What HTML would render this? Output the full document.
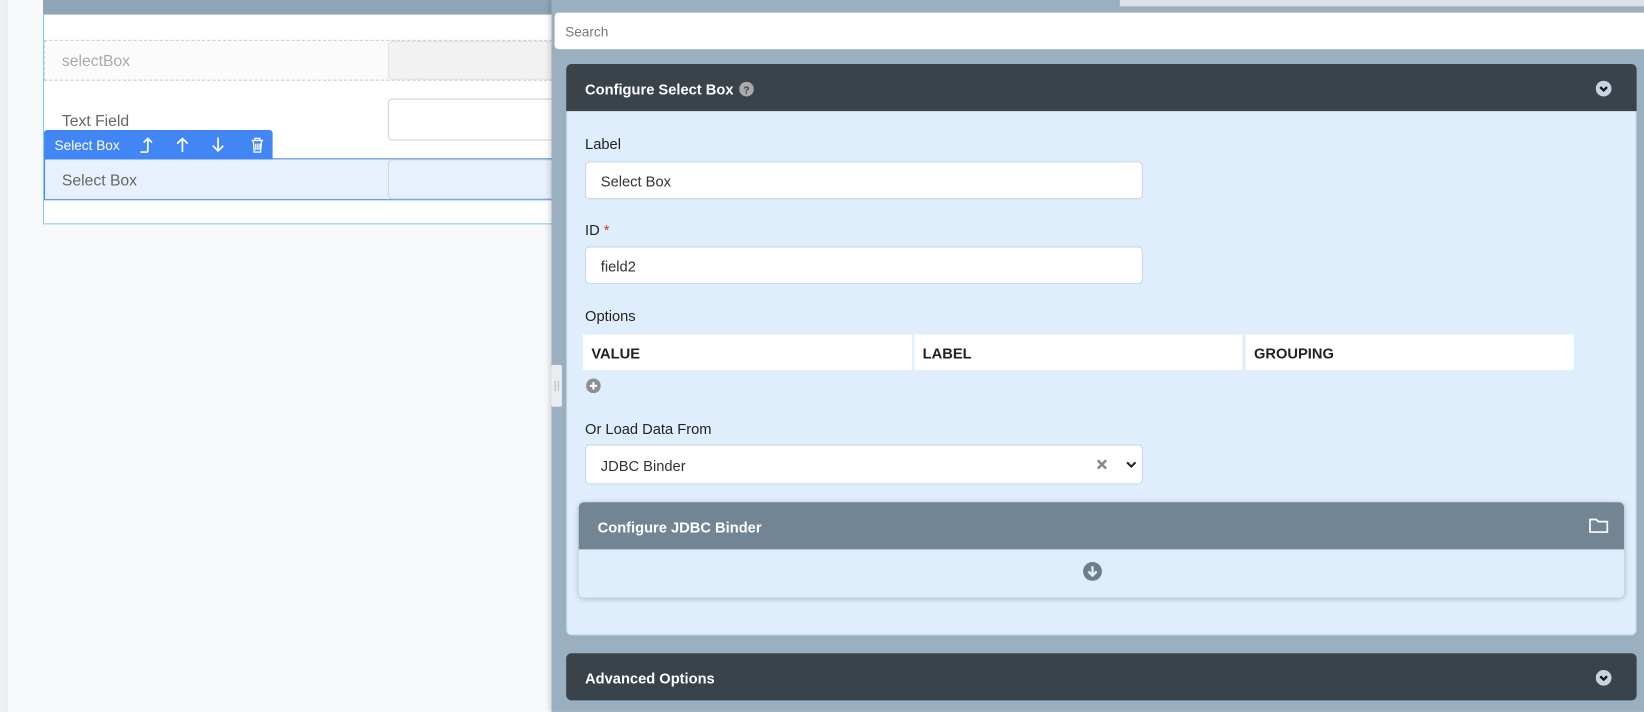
<!DOCTYPE html>
<html><head><meta charset="utf-8"><style>
*{box-sizing:border-box;margin:0;padding:0}
html,body{width:1644px;height:712px;overflow:hidden;background:#f7f9fb;font-family:"Liberation Sans",sans-serif}
#w{position:absolute;left:0;top:0;width:1568px;height:679px;transform:scale(1.04847);transform-origin:0 0;background:#f7f9fb}
.a{position:absolute}
.lbl{position:absolute;font-size:14px;color:#222}
.inp{position:absolute;background:#fff;border:1px solid #ccd6e0;border-radius:4px;font-size:14px;color:#333;padding-left:14px;padding-top:1px;display:flex;align-items:center}
.th{position:absolute;top:319px;height:34px;background:#fff;font-weight:bold;font-size:14px;color:#222;padding-left:8px;padding-top:2px;display:flex;align-items:center}
.hd{position:absolute;color:#fff;font-weight:bold;font-size:14px;display:flex;align-items:center;padding-top:2px}
</style></head><body><div id="w">
<div class="a" style="left:0;top:0;width:7px;height:679px;background:#eceef1;border-right:1px solid #e2e5e8"></div>
<div class="a" style="left:41px;top:0;width:490px;height:14px;background:#8fa5b8"></div>
<div class="a" style="left:41px;top:14px;width:490px;height:200px;background:#fff;border:1px solid #7fd0f5;border-top:none"></div>
<div class="a" style="left:42px;top:38px;width:490px;height:39px;background:#fbfbfb;border:1px dashed #ccc;border-right:none"></div>
<div class="a" style="left:59px;top:50px;font-size:15px;color:#aaa">selectBox</div>
<div class="a" style="left:370px;top:39px;width:170px;height:37px;background:#f2f2f2;border:1px solid #e3e3e3;border-radius:4px"></div>
<div class="a" style="left:59px;top:107px;font-size:15px;color:#666">Text Field</div>
<div class="a" style="left:370px;top:94px;width:170px;height:40px;background:#fff;border:1px solid #ccd3dc;border-radius:4px"></div>
<div class="a" style="left:42px;top:151px;width:490px;height:40px;background:#e8f0fd;border:1px solid #4a88ec;border-right:none"></div>
<div class="a" style="left:59px;top:164px;font-size:15px;color:#666">Select Box</div>
<div class="a" style="left:370px;top:152px;width:170px;height:38px;background:#e8f0fd;border:1px solid #ccd6e6;border-radius:4px"></div>
<div class="a" style="left:42px;top:124px;width:218px;height:28px;background:#4285f4;border-radius:3px 3px 0 0;color:#fff;font-size:13px;padding:7px 0 0 10px">Select Box</div>
<svg class="a" style="left:132px;top:129px" width="120" height="18" fill="none" stroke="#fff" stroke-width="1.6">
<path d="M9 16V3M5 7l4-4 4 4M2 16h7"/><path d="M42 16V3M37 8l5-5 5 5"/><path d="M76 2v13M71 10l5 5 5-5"/>
<path d="M108 5h11M111 5V3h5v2M109.5 5l1 11h6l1-11M112 8v6M114 8v6M116 8v6" stroke-width="1.3"/></svg>
<div class="a" style="left:526px;top:0;width:1042px;height:679px;background:#9aafc0;box-shadow:-3px 0 4px rgba(0,0,0,.12)"></div>
<div class="a" style="left:1068px;top:0;width:500px;height:6px;background:#dde1e6"></div>
<div class="a" style="left:529px;top:12px;width:1045px;height:35px;background:#fff;border-radius:4px;font-size:13px;color:#777;padding:11px 0 0 10px">Search</div>
<div class="a" style="left:526px;top:348px;width:10px;height:40px;background:#e9edf1;border-radius:2px"></div>
<div class="a" style="left:529px;top:363px;width:4px;height:10px;border-left:1px solid #bbb;border-right:1px solid #bbb"></div>
<div class="a" style="left:540px;top:61px;width:1021px;height:545px;background:#deeefd;border-radius:5px;border:1px solid #c8d6e2"></div>
<div class="hd" style="left:540px;top:61px;width:1021px;height:45px;background:#3a424a;border-radius:5px 5px 0 0;padding-left:18px">Configure Select Box
<svg style="margin-left:5px" width="14" height="14"><circle cx="7" cy="7" r="7" fill="#aaa"/><text x="7" y="11" font-size="10" font-weight="bold" fill="#3a424a" text-anchor="middle" font-family="Liberation Sans">?</text></svg></div>
<svg class="a" style="left:1522px;top:77px" width="15" height="15"><circle cx="7.5" cy="7.5" r="7.5" fill="#c6d4e2"/><path d="M4.3 6l3.2 3.2 3.2-3.2" stroke="#111" stroke-width="2.2" fill="none"/></svg>
<div class="lbl" style="left:558px;top:129px">Label</div>
<div class="inp" style="left:558px;top:154px;width:532px;height:36px">Select Box</div>
<div class="lbl" style="left:558px;top:211px">ID <span style="color:#d33">*</span></div>
<div class="inp" style="left:558px;top:235px;width:532px;height:36px">field2</div>
<div class="lbl" style="left:558px;top:293px">Options</div>
<div class="th" style="left:556px;width:314px">VALUE</div>
<div class="th" style="left:872px;width:313px">LABEL</div>
<div class="th" style="left:1188px;width:313px">GROUPING</div>
<svg class="a" style="left:559px;top:361px" width="14" height="14"><circle cx="7" cy="7" r="7" fill="#8a8f95"/><path d="M7 3.5v7M3.5 7h7" stroke="#fff" stroke-width="2"/></svg>
<div class="lbl" style="left:558px;top:401px">Or Load Data From</div>
<div class="inp" style="left:558px;top:424px;width:532px;height:38px">JDBC Binder</div>
<svg class="a" style="left:1045px;top:436px" width="40" height="14"><path d="M2 3l8 8M10 3l-8 8" stroke="#888" stroke-width="2.4"/><path d="M30 5l4 4 4-4" stroke="#222" stroke-width="2" fill="none"/></svg>
<div class="a" style="left:552px;top:479px;width:997px;height:91px;background:#deeefc;border-radius:5px;box-shadow:0 1px 5px rgba(0,0,0,.22)"></div>
<div class="hd" style="left:552px;top:479px;width:997px;height:45px;background:#728595;border-radius:5px 5px 0 0;padding-left:18px">Configure JDBC Binder</div>
<svg class="a" style="left:1515px;top:493px" width="20" height="16"><path d="M1.5 2.5h6l2 2h8.5v10h-16.5z" stroke="#fff" stroke-width="1.6" fill="none"/></svg>
<svg class="a" style="left:1033px;top:536px" width="18" height="18"><circle cx="9" cy="9" r="9" fill="#6c7d8c"/><path d="M9 4v9M5 9l4 4 4-4" stroke="#deeefc" stroke-width="2.2" fill="none"/></svg>
<div class="hd" style="left:540px;top:623px;width:1021px;height:45px;background:#3a424a;border-radius:5px;padding-left:18px">Advanced Options</div>
<svg class="a" style="left:1522px;top:639px" width="15" height="15"><circle cx="7.5" cy="7.5" r="7.5" fill="#c6d4e2"/><path d="M4.3 6l3.2 3.2 3.2-3.2" stroke="#111" stroke-width="2.2" fill="none"/></svg>
</div></body></html>
